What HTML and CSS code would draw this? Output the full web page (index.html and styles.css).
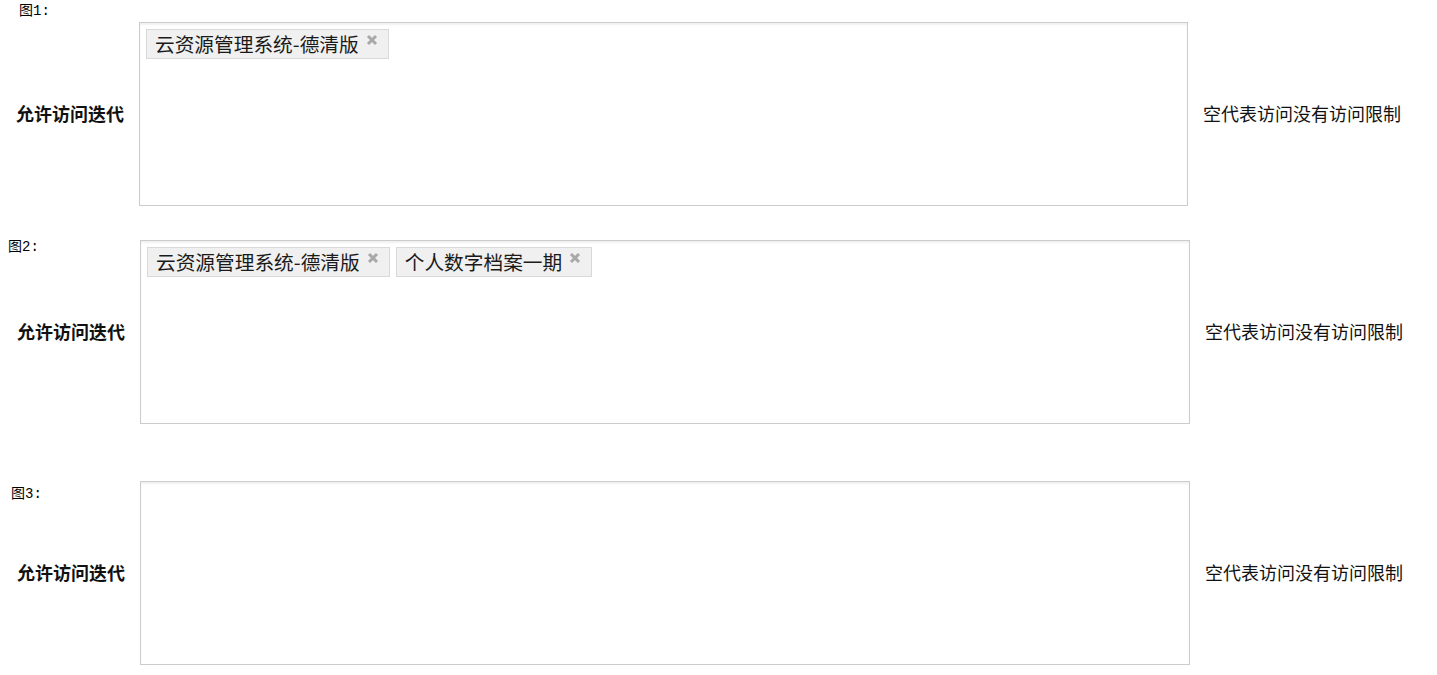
FILE: index.html
```html
<!DOCTYPE html>
<html lang="zh-CN">
<head>
<meta charset="utf-8">
<title>允许访问迭代</title>
<link rel="stylesheet" href="styles.css">
</head>
<body>
<section class="fig fig1">
  <div class="caption">图1:</div>
  <div class="row">
    <div class="label">允许访问迭代</div>
    <div class="box">
      <span class="tag"><span class="tag-text">云资源管理系统-德清版</span><svg class="x" viewBox="0 0 12 12" width="12" height="12"><path d="M2 2L10 10M10 2L2 10"/></svg></span>
    </div>
    <div class="note">空代表访问没有访问限制</div>
  </div>
</section>

<section class="fig fig2">
  <div class="row">
    <div class="caption">图2:</div>
    <div class="label">允许访问迭代</div>
    <div class="box">
      <span class="tag"><span class="tag-text">云资源管理系统-德清版</span><svg class="x" viewBox="0 0 12 12" width="12" height="12"><path d="M2 2L10 10M10 2L2 10"/></svg></span>
      <span class="tag"><span class="tag-text">个人数字档案一期</span><svg class="x" viewBox="0 0 12 12" width="12" height="12"><path d="M2 2L10 10M10 2L2 10"/></svg></span>
    </div>
    <div class="note">空代表访问没有访问限制</div>
  </div>
</section>

<section class="fig fig3">
  <div class="row">
    <div class="caption">图3:</div>
    <div class="label">允许访问迭代</div>
    <div class="box"></div>
    <div class="note">空代表访问没有访问限制</div>
  </div>
</section>
</body>
</html>
```

FILE: styles.css
```css
html, body {
  margin: 0;
  padding: 0;
  background: #fff;
}

body {
  font-family: "Noto Sans CJK SC", "Noto Sans", sans-serif;
  color: #111;
}

.caption {
  font-family: "Liberation Mono", "Noto Sans CJK SC", monospace;
  font-size: 14px;
  line-height: 15px;
  color: #000;
}

.fig1 .caption {
  height: 22px;
  line-height: 22px;
  padding-left: 19px;
  box-sizing: border-box;
}

.row {
  display: grid;
  grid-template-columns: 139px 1049px 1fr;
  height: 184px;
}

.fig2 .row,
.fig3 .row {
  grid-template-columns: 140px 1050px 1fr;
}

.fig2 {
  margin-top: 34px;
}

.fig3 {
  margin-top: 57px;
}

.fig2 .caption {
  grid-area: 1 / 1;
  align-self: start;
  padding-left: 8px;
  margin-top: 0;
}

.fig3 .caption {
  grid-area: 1 / 1;
  align-self: start;
  padding-left: 11px;
  margin-top: 6px;
}

.label {
  grid-area: 1 / 1;
  align-self: center;
  padding-left: 16px;
  padding-bottom: 2px;
  font-size: 18px;
  line-height: 22px;
  font-weight: 700;
  color: #111;
}

.fig2 .label,
.fig3 .label {
  padding-left: 17px;
}

.box {
  grid-area: 1 / 2;
  box-sizing: border-box;
  border: 1px solid #cccccc;
  box-shadow: inset 0 2px 2px rgba(0, 0, 0, 0.06);
  padding: 6px;
  display: flex;
  flex-wrap: wrap;
  align-content: flex-start;
  align-items: flex-start;
  gap: 6px;
  background: #fff;
}

.note {
  grid-area: 1 / 3;
  align-self: center;
  padding-left: 15px;
  padding-bottom: 2px;
  font-size: 18px;
  line-height: 22px;
  color: #111;
}

.fig2 .note,
.fig3 .note {
  padding-left: 15px;
}

.tag {
  box-sizing: border-box;
  height: 30px;
  display: inline-flex;
  align-items: flex-start;
  background: #f0f0f0;
  border: 1px solid #d9d9d9;
  padding: 0 10px 0 8px;
}

.tag-text {
  font-size: 19.7px;
  line-height: 28px;
  color: #1a1a1a;
}

.x {
  margin-left: 7px;
  margin-top: 4px;
  flex: none;
}

.x path {
  stroke: #a8a8a8;
  stroke-width: 3;
  fill: none;
}
```
